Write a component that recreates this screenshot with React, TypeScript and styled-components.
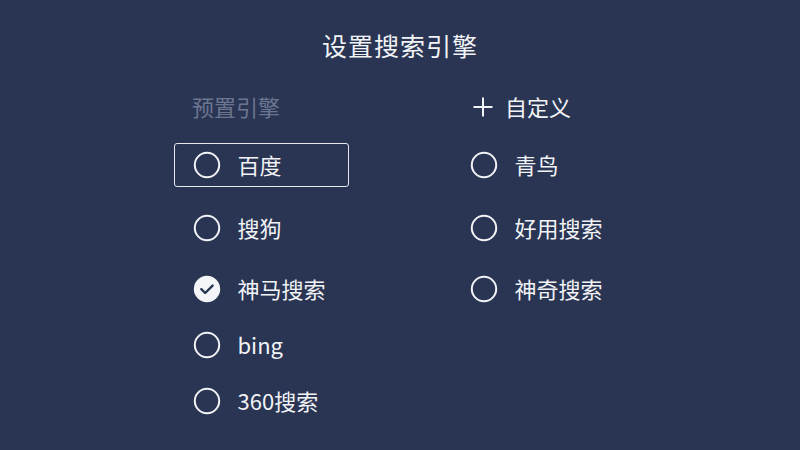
import React from "react";
import styled, { createGlobalStyle } from "styled-components";

const Global = createGlobalStyle`
  html, body { margin: 0; padding: 0; background: #293553; }
  body { font-family: "Noto Sans CJK SC", "Noto Sans", sans-serif; }
`;

const Page = styled.div`
  width: 800px;
  height: 450px;
  background: #293553;
  color: #f2f3f6;
  display: flex;
  flex-direction: column;
  align-items: center;
  padding-top: 27px;
  box-sizing: border-box;
`;

const Title = styled.h1`
  margin: 0;
  font-size: 25px;
  font-weight: 400;
  line-height: 36px;
  letter-spacing: 1px;
`;

const Columns = styled.div`
  display: flex;
  gap: 102px;
  margin-top: 29px;
`;

const Column = styled.div`
  width: 175px;
  display: flex;
  flex-direction: column;
`;

const Header = styled.div<{ $muted?: boolean }>`
  height: 30px;
  display: flex;
  align-items: center;
  gap: 8px;
  padding-left: 18px;
  font-size: 22px;
  line-height: 30px;
  color: ${(p) => (p.$muted ? "#6c7590" : "#f2f3f6")};
`;

const Row = styled.div<{ $top: number; $focused?: boolean }>`
  height: 44px;
  box-sizing: border-box;
  margin-top: ${(p) => p.$top}px;
  display: flex;
  align-items: center;
  gap: 17px;
  padding-left: 17.5px;
  border: 1.5px solid ${(p) => (p.$focused ? "#e6e8ee" : "transparent")};
  border-radius: 3px;
  font-size: 22px;
  line-height: 30px;
`;

const Label = styled.span`
  padding-bottom: 3px;
`;

const IconBox = styled.span`
  display: inline-flex;
  width: 28px;
  height: 28px;
  flex: none;
`;

const Radio = ({ checked }: { checked?: boolean }) => (
  <IconBox>
    <svg width="28" height="28" viewBox="0 0 28 28">
      {checked ? (
        <>
          <circle cx="14" cy="14" r="13.2" fill="#f4f5f8" />
          <path
            d="M8.3 14.2 L12.2 18 L19.6 10.6"
            fill="none"
            stroke="#293553"
            strokeWidth="2.4"
            strokeLinecap="round"
            strokeLinejoin="round"
          />
        </>
      ) : (
        <circle cx="14" cy="14" r="12.2" fill="none" stroke="#f2f3f6" strokeWidth="2" />
      )}
    </svg>
  </IconBox>
);

const Plus = () => (
  <IconBox>
    <svg width="28" height="28" viewBox="0 0 28 28">
      <path d="M14 4.5 V23.5 M4.5 14 H23.5" stroke="#f2f3f6" strokeWidth="2" fill="none" />
    </svg>
  </IconBox>
);

const left = [
  { name: "百度", top: 21, focused: true },
  { name: "搜狗", top: 19 },
  { name: "神马搜索", top: 17, checked: true },
  { name: "bing", top: 12 },
  { name: "360搜索", top: 12 },
];

const right = [
  { name: "青鸟", top: 21 },
  { name: "好用搜索", top: 19 },
  { name: "神奇搜索", top: 17 },
];

export default function App() {
  return (
    <>
      <Global />
      <Page>
        <Title>设置搜索引擎</Title>
        <Columns>
          <Column>
            <Header $muted>
              <Label>预置引擎</Label>
            </Header>
            {left.map((e) => (
              <Row key={e.name} $top={e.top} $focused={e.focused}>
                <Radio checked={e.checked} />
                <Label>{e.name}</Label>
              </Row>
            ))}
          </Column>
          <Column>
            <Header>
              <Plus />
              <Label>自定义</Label>
            </Header>
            {right.map((e) => (
              <Row key={e.name} $top={e.top}>
                <Radio />
                <Label>{e.name}</Label>
              </Row>
            ))}
          </Column>
        </Columns>
      </Page>
    </>
  );
}
